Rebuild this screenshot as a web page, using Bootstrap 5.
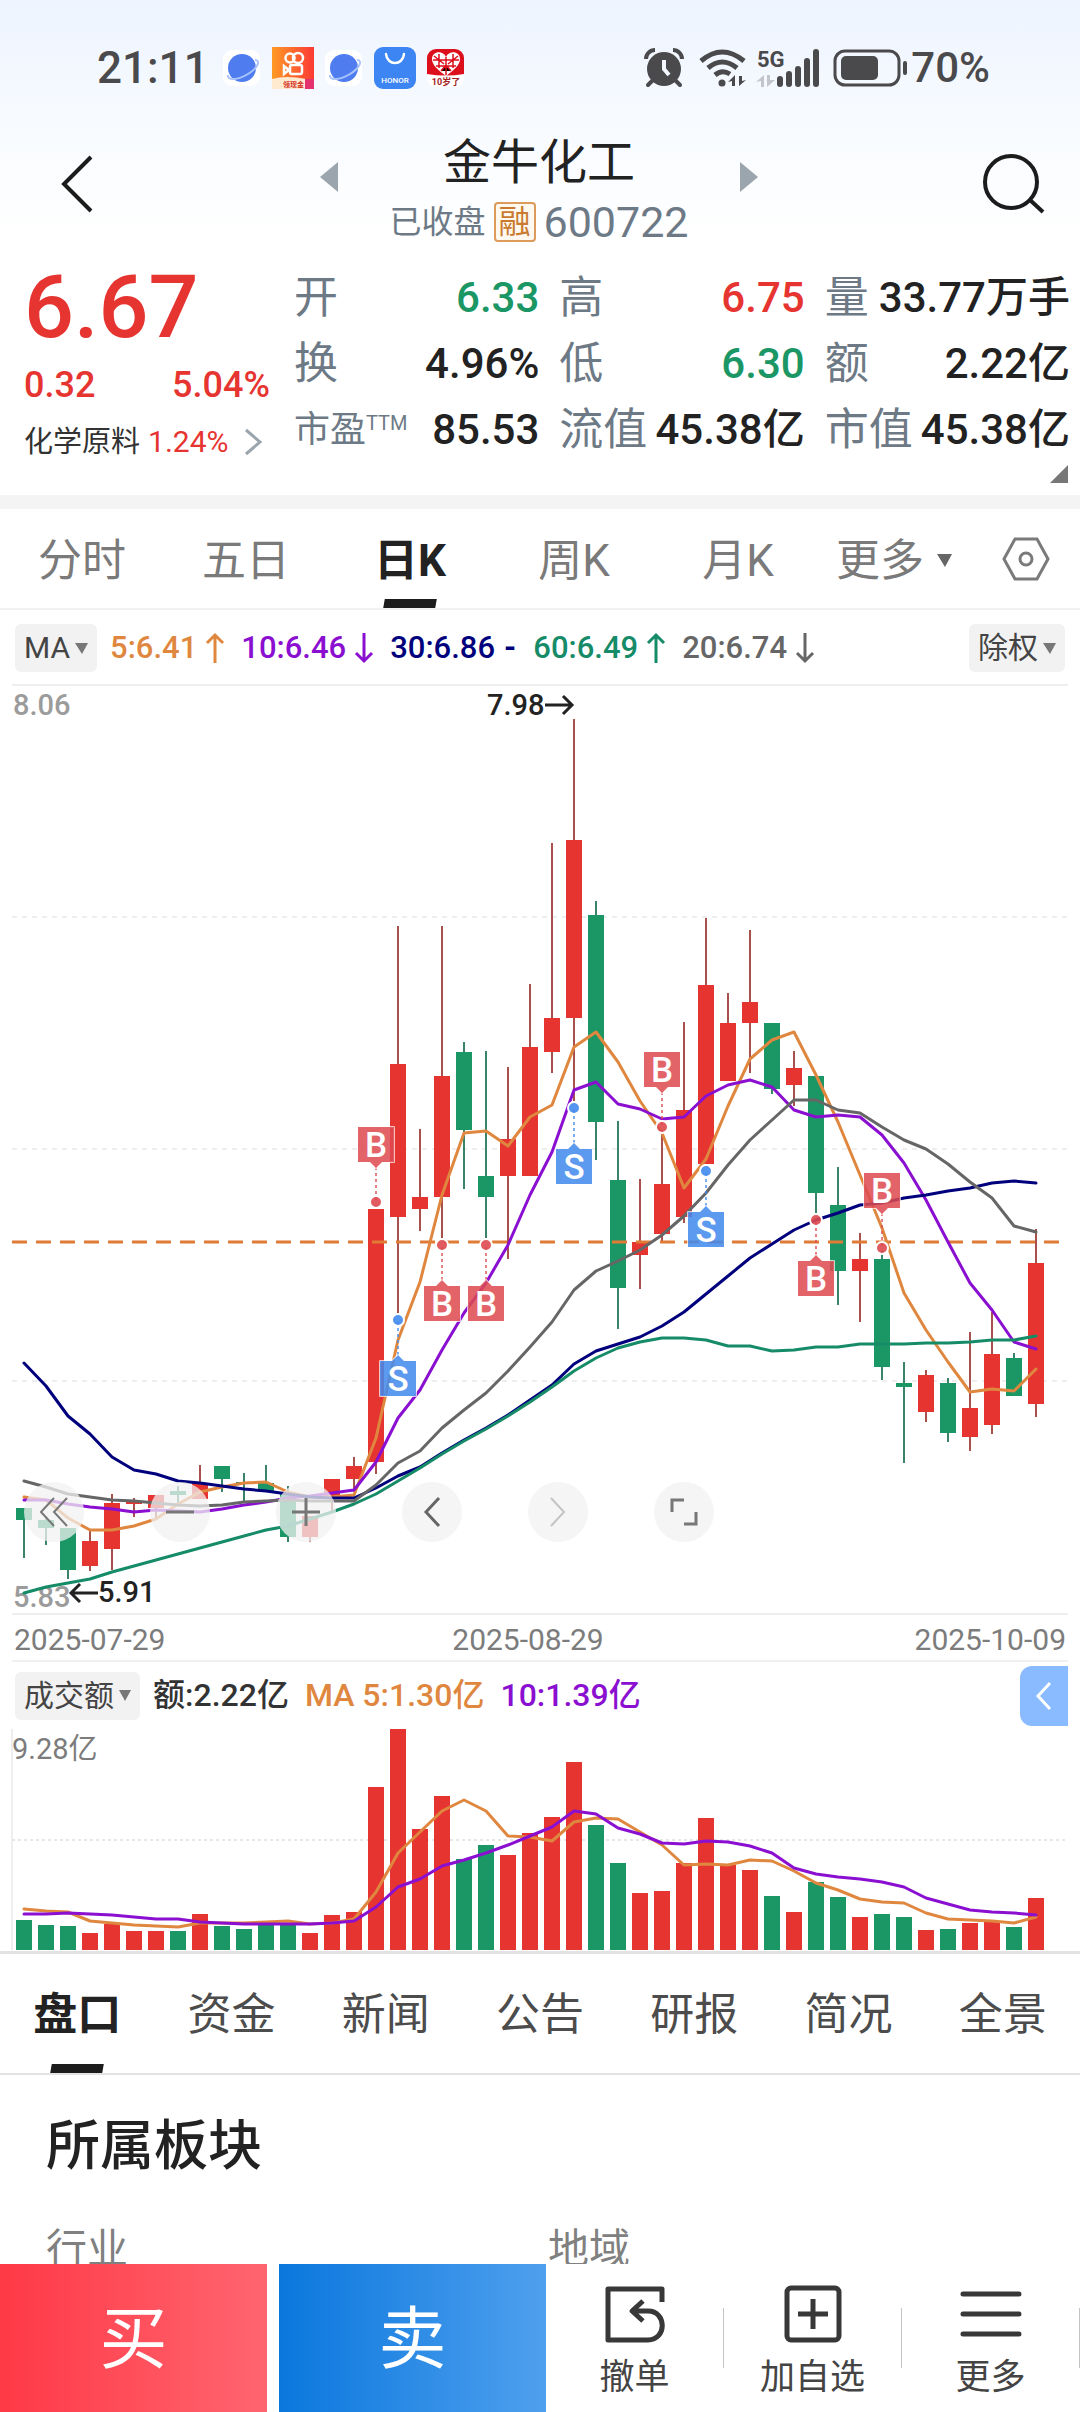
<!DOCTYPE html>
<html lang="zh-CN">
<head>
<meta charset="utf-8">
<meta name="viewport" content="width=device-width, initial-scale=1">
<title>金牛化工 600722</title>
<link href="https://cdn.jsdelivr.net/npm/bootstrap@5.3.0/dist/css/bootstrap.min.css" rel="stylesheet">
<style>
:root{--up:#e63431;--down:#1b9665;--ink:#222;--slate:#6d7a86}
body{font-family:Roboto,"Noto Sans CJK SC",sans-serif;color:var(--ink);background:#fff;line-height:1.2}
button{font-family:inherit}
svg{display:block;flex:none;overflow:visible}
.plain{background:none;border:0;padding:0;color:inherit}
.up{color:var(--up)}.down{color:var(--down)}
.top-area{background:linear-gradient(#edf4ff,#f8fbff 130px,#fff 240px)}
.status{padding:42px 90px 0 97px;height:94px;color:#4a4a4c;font-size:44px;line-height:52px;font-weight:500}
.apps{margin-left:12px;gap:9px}
.power{font-size:42px}
.app-head{padding:41px 34px 6px 60px}
.head-btn{height:98px}
.tri-btn{height:84px}
.switcher{gap:48px}
.stock-name{font-size:48px;line-height:56px;font-weight:400;margin:0 0 7px}
.stock-sub{color:var(--slate);font-size:32px;line-height:48px;width:306px}
.stock-code{font-size:43px}
.rong{color:#c97a2f;border:2px solid #dc9a5b;border-radius:4px;width:42px;line-height:36px;text-align:center;background:#fff8ef}
.quote{padding:13px 10px 0 24px;gap:24px}
.quote-left{width:246px}
.price{font-size:88px;line-height:84px;font-weight:500}
.chg{font-size:36px;line-height:48px;margin:12px 0;font-weight:500}
.sector{font-size:29px;line-height:42px;color:#333}
.sector .up{font-size:30px}
.stats{display:grid;grid-template-columns:repeat(3,1fr);column-gap:20px}
.stat{line-height:66px;font-size:42px;font-weight:500;white-space:nowrap}
.stat dt{font-weight:400;font-size:44px;color:var(--slate)}
.stat dt.pe{font-size:36px}
.pe sup{font-size:20px;top:-12px}
.stat dd{margin:0}
.corner{padding:2px 12px 12px}
.band{height:14px;background:#f4f4f4}
.period{height:101px;border-bottom:2px solid #f1f1f1;color:#7a7a7a;font-size:44px}
.tab-item{position:relative;height:100%;font-size:44px;text-align:center}
.period .tab-item,.more-wrap{padding-top:5px}
.info-tabs .tab-item{padding-top:3px}
.tab-item.on{font-weight:700;color:var(--ink)}
.tab-item.on::after{content:"";position:absolute;left:50%;bottom:0;width:52px;height:9px;margin-left:-26px;background:#1c1c1c;transform:skewX(-10deg)}
.more-wrap{width:124px;margin-left:16px}
.set-wrap{width:120px;padding-right:29px}
.ind-row{padding:2px 15px 0;height:74px}
.pill{background:#f2f2f2;border:0;border-radius:6px;height:48px;padding:0 9px;color:#444;font-size:30px;gap:5px;display:flex;align-items:center}
.ma{font-size:31px;font-weight:500;gap:17px;margin-left:13px}
.ma span{display:flex;align-items:center;gap:9px}
.c5{color:#e0873f}.c10{color:#8a0fd0}.c30{color:#00007c}.c60{color:#168b68}.c20{color:#666}
.chart{position:relative}
.chart svg.plot{width:100%;height:auto}
.zoomer{position:absolute;left:24px;bottom:73px;gap:66px}
.zoomer button{width:60px;height:60px;border-radius:50%;border:0;padding:0;background:rgba(241,241,241,.75);display:flex;align-items:center;justify-content:center}
.dates{margin:0 12px;padding:4px 2px 0;border-bottom:2px solid #f0f0f0;height:47px;font-size:30px;color:#7c7c7c}
.vol-row{padding:0 12px 0 15px;height:67px;font-size:32px;color:#333}
.readout{gap:16px;margin-left:13px;font-weight:500}
.drawer{width:48px;height:60px;background:#8abaff;border-radius:12px 0 0 12px}
.info-tabs{height:124px;border-top:3px solid #e2e2e2;border-bottom:2px solid #e2e2e2;color:#4c4c4c}
.blocks{padding:38px 46px 0}
.blocks h2{font-size:54px;line-height:68px;font-weight:500;margin:0 0 43px}
.blocks .lbl{font-size:41px;line-height:50px;color:#808080}
.bar-btm{height:148px;background:#fff}
.trade{width:267px;font-size:68px;color:#fff;border:0;padding:6px 0 0}
.buy{background:linear-gradient(90deg,#ff3946,#ff6570)}
.sell{background:linear-gradient(90deg,#0a77dd,#4fa0ee);margin-left:12px}
.act{color:#444;font-size:35px;line-height:44px;height:148px;padding-top:9px;gap:13px}
.act-sep{width:3px;height:60px;background:#c4c4c4}
</style>
</head>
<body>
<header class="top-area">
  <div class="status d-flex align-items-center">
    <span>21:11</span>
    <span class="apps d-flex align-items-center">
      <svg width="42" height="40" viewBox="0 0 42 40"><rect x="2" y="2" width="37" height="36" rx="9" fill="#fff"/><circle cx="21" cy="20" r="14" fill="#4f7df0"/><path d="M34 12c6 0 3 8-7 14S6 33 7 27" fill="none" stroke="#a9c3fb" stroke-width="2"/></svg>
      <svg width="42" height="42" viewBox="0 0 42 42"><defs><linearGradient id="ks"><stop stop-color="#ff9a26"/><stop offset="1" stop-color="#fb3a34"/></linearGradient></defs><rect width="42" height="42" fill="url(#ks)"/><g fill="none" stroke="#fff" stroke-width="2.500"><circle cx="18" cy="11" r="4.500"/><circle cx="26" cy="11" r="5"/><rect x="18" y="18" width="12" height="9" rx="2"/><path d="M12 19v8l5-4z"/></g><path d="M0 32q14-4 34 0v10H0z" fill="#ffe9cf"/><text x="11" y="40" font-size="7" font-weight="700" fill="#d3301f">领现金</text><rect x="33" y="32" width="9" height="10" fill="#e4326e"/></svg>
      <svg width="42" height="40" viewBox="0 0 42 40"><rect x="2" y="2" width="37" height="36" rx="9" fill="#fff"/><circle cx="21" cy="20" r="14" fill="#4f7df0"/><path d="M34 12c6 0 3 8-7 14S6 33 7 27" fill="none" stroke="#a9c3fb" stroke-width="2"/></svg>
      <svg width="42" height="42" viewBox="0 0 42 42"><rect width="42" height="42" rx="9" fill="#3d85f2"/><path d="M12 7c1 12 17 12 18 0" fill="none" stroke="#fff" stroke-width="2.500" stroke-linecap="round"/><text x="21" y="36" font-size="8" text-anchor="middle" fill="#fff">HONOR</text></svg>
      <svg width="42" height="40" viewBox="-1 0 42 40"><rect x="1" y="1" width="37" height="38" rx="9" fill="#fff"/><path d="M10 1h19a9 9 0 0 1 9 9v16q-18 3-37 0V10a9 9 0 0 1 9-9z" fill="#dc0f1c"/><path d="M20 28C12 22 6 17 6 11c0-8 11-9 14-2 3-7 14-6 14 2 0 6-6 11-14 17z" fill="#fff"/><path d="M20 9v18M13 6v14M27 6v14M7 12h26M10 18h20M8 8l10 8M32 8l-10 8M15 23l5-6 5 6" stroke="#dc0f1c" stroke-width="1.500"/><text x="20" y="37" font-size="9" font-weight="700" text-anchor="middle" fill="#a3221e">10岁了</text></svg>
    </span>
    <span class="d-flex align-items-center ms-auto">
      <svg width="38" height="38" viewBox="0 0 38 38" fill="#4a4a4c"><circle cx="19" cy="20" r="17"/><path d="M7 32l-4 4M31 32l4 4" stroke="#4a4a4c" stroke-width="4" stroke-linecap="round"/><path d="M1 10a9 9 0 0 1 9-9M37 10a9 9 0 0 0-9-9" fill="none" stroke="#4a4a4c" stroke-width="4"/><path d="M19 11v9l5 6" fill="none" stroke="#f3f7ff" stroke-width="4"/></svg>
      <svg class="ms-3" width="48" height="38" viewBox="0 0 48 38" fill="none" stroke="#4a4a4c" stroke-width="5"><path d="M2 12q21-18 43 0M9 19q14-12 29 0M16 26q7-6 15-1"/><circle cx="23" cy="34" r="3.500" fill="#4a4a4c" stroke="none"/><path d="M29 33l7-7v11h-3v-5zM47 31l-7 6V27h3v5z" fill="#4a4a4c" stroke="none"/></svg>
      <svg class="ms-2" width="66" height="44" viewBox="0 -3 66 44" fill="#4a4a4c"><text x="2" y="18" font-size="22" font-weight="700">5G</text><path d="M1 33l8-7v12H6v-6zM20 31l-8 7V26h3v5z" fill="#c3c5ca"/><rect x="22" y="27" width="6" height="11" rx="3"/><rect x="31" y="22" width="6" height="16" rx="3"/><rect x="40" y="17" width="6" height="21" rx="3"/><rect x="49" y="9" width="6" height="29" rx="3"/><rect x="58" y="0" width="6" height="38" rx="3"/></svg>
      <svg class="ms-2" width="78" height="38" viewBox="0 0 78 38"><rect x="6" y="2" width="64" height="34" rx="10" fill="none" stroke="#4a4a4c" stroke-width="3"/><rect x="12" y="7" width="37" height="24" rx="5" fill="#4a4a4c"/><rect x="74" y="12" width="4" height="14" rx="2" fill="#4a4a4c"/></svg>
      <span class="power ms-1">70%</span>
    </span>
  </div>
  <div class="app-head d-flex justify-content-between align-items-start">
    <button class="plain head-btn" aria-label="返回"><svg width="36" height="60" viewBox="0 0 36 60"><path d="M31 3L4 30l27 27" fill="none" stroke="#1c1c1c" stroke-width="4"/></svg></button>
    <div class="switcher d-flex align-items-start">
      <button class="plain tri-btn" aria-label="上一只"><svg width="18" height="30"><path d="M18 0v30L0 15z" fill="#9ba5ae"/></svg></button>
      <div class="text-center">
        <h1 class="stock-name">金牛化工</h1>
        <div class="stock-sub d-flex align-items-center justify-content-center gap-2"><span>已收盘</span><span class="rong">融</span><span class="stock-code">600722</span></div>
      </div>
      <button class="plain tri-btn" aria-label="下一只"><svg width="18" height="30"><path d="M0 0v30l18-15z" fill="#9ba5ae"/></svg></button>
    </div>
    <button class="plain head-btn" aria-label="搜索"><svg width="64" height="62" viewBox="0 0 64 62"><circle cx="29" cy="29" r="26" fill="none" stroke="#1c1c1c" stroke-width="4"/><path d="M48 47l13 12" stroke="#1c1c1c" stroke-width="4"/></svg></button>
  </div>
</header>

<section class="quote d-flex">
  <div class="quote-left">
    <div class="price up">6.67</div>
    <div class="chg up d-flex justify-content-between"><span>0.32</span><span>5.04%</span></div>
    <a href="#" class="sector d-flex align-items-center gap-2 text-decoration-none"><span>化学原料</span><span class="up">1.24%</span><svg class="ms-2" width="18" height="28" viewBox="0 0 18 28"><path d="M2 2l14 12L2 26" fill="none" stroke="#9ba5ae" stroke-width="3"/></svg></a>
  </div>
  <dl class="stats flex-grow-1 mb-0">
    <div class="stat d-flex justify-content-between"><dt>开</dt><dd class="down">6.33</dd></div>
    <div class="stat d-flex justify-content-between"><dt>高</dt><dd class="up">6.75</dd></div>
    <div class="stat d-flex justify-content-between"><dt>量</dt><dd>33.77万手</dd></div>
    <div class="stat d-flex justify-content-between"><dt>换</dt><dd>4.96%</dd></div>
    <div class="stat d-flex justify-content-between"><dt>低</dt><dd class="down">6.30</dd></div>
    <div class="stat d-flex justify-content-between"><dt>额</dt><dd>2.22亿</dd></div>
    <div class="stat d-flex justify-content-between"><dt class="pe">市盈<sup>TTM</sup></dt><dd>85.53</dd></div>
    <div class="stat d-flex justify-content-between"><dt>流值</dt><dd>45.38亿</dd></div>
    <div class="stat d-flex justify-content-between"><dt>市值</dt><dd>45.38亿</dd></div>
  </dl>
</section>
<div class="corner d-flex justify-content-end"><svg width="18" height="18"><path d="M18 0v18H0z" fill="#777"/></svg></div>
<div class="band"></div>

<nav class="period d-flex align-items-center">
  <button class="plain tab-item flex-fill w-100">分时</button>
  <button class="plain tab-item flex-fill w-100">五日</button>
  <button class="plain tab-item flex-fill w-100 on">日K</button>
  <button class="plain tab-item flex-fill w-100">周K</button>
  <button class="plain tab-item flex-fill w-100">月K</button>
  <button class="plain more-wrap d-flex align-items-center flex-shrink-0">更多<svg class="ms-auto me-2" width="15" height="13"><path d="M0 0h15l-7 13z" fill="#666"/></svg></button>
  <button class="plain set-wrap flex-shrink-0 d-flex justify-content-end" aria-label="设置"><svg width="50" height="44" viewBox="0 0 50 44" fill="none" stroke="#7a7a7a" stroke-width="3"><path d="M14 2h22l11 20-11 20H14L3 22z"/><circle cx="25" cy="22" r="6"/></svg></button>
</nav>

<div class="ind-row d-flex align-items-center">
  <button class="pill">MA<svg width="13" height="11"><path d="M0 0h13l-6 11z" fill="#777"/></svg></button>
  <div class="ma d-flex">
    <span class="c5">5:6.41<svg width="18" height="30" viewBox="0 0 18 30"><path d="M9 30V2M1 10l8-8 8 8" fill="none" stroke="currentColor" stroke-width="3"/></svg></span>
    <span class="c10">10:6.46<svg width="18" height="30" viewBox="0 0 18 30"><path d="M9 0v28M1 20l8 8 8-8" fill="none" stroke="currentColor" stroke-width="3"/></svg></span>
    <span class="c30">30:6.86<b>-</b></span>
    <span class="c60">60:6.49<svg width="18" height="30" viewBox="0 0 18 30"><path d="M9 30V2M1 10l8-8 8 8" fill="none" stroke="currentColor" stroke-width="3"/></svg></span>
    <span class="c20">20:6.74<svg width="18" height="30" viewBox="0 0 18 30"><path d="M9 0v28M1 20l8 8 8-8" fill="none" stroke="currentColor" stroke-width="3"/></svg></span>
  </div>
  <button class="pill ms-auto">除权<svg width="13" height="11"><path d="M0 0h13l-6 11z" fill="#777"/></svg></button>
</div>

<div class="chart">
  <svg class="plot" id="kline" viewBox="0 684 1080 931" role="img" aria-label="日K线图">
    <path d="M12 685h1056M12 1614h1056" stroke="#eee" stroke-width="2"/>
    <path d="M12 917h1056M12 1149h1056M12 1381h1056" stroke="#eee" stroke-width="2" stroke-dasharray="5 5"/>
    <text x="13" y="715" font-size="29" font-weight="500" fill="#9b9b9b">8.06</text>
    <text x="13" y="1607" font-size="29" font-weight="500" fill="#9b9b9b">5.83</text>
    <text x="487" y="715" font-size="29" font-weight="500" fill="#222">7.98</text>
    <path d="M545 705h27M563 696l9 9-9 9" fill="none" stroke="#222" stroke-width="3"/>
    <text x="98" y="1602" font-size="29" font-weight="500" fill="#222">5.91</text>
    <path d="M98 1593H71M80 1584l-9 9 9 9" fill="none" stroke="#222" stroke-width="3"/>
  </svg>
  <div class="zoomer d-flex">
    <button aria-label="最早"><svg width="30" height="30" viewBox="0 0 30 30" fill="none" stroke="#777" stroke-width="2"><path d="M15 1L2 15l13 14M28 1L15 15l13 14"/></svg></button>
    <button aria-label="缩小"><svg width="30" height="30"><path d="M1 15h28" stroke="#777" stroke-width="3"/></svg></button>
    <button aria-label="放大"><svg width="30" height="30"><path d="M1 15h28M15 1v28" stroke="#777" stroke-width="3"/></svg></button>
    <button aria-label="左移"><svg width="16" height="30" viewBox="0 0 16 30"><path d="M15 1L2 15l13 14" fill="none" stroke="#666" stroke-width="3"/></svg></button>
    <button aria-label="右移"><svg width="16" height="30" viewBox="0 0 16 30"><path d="M1 1l13 14L1 29" fill="none" stroke="#c4c4c4" stroke-width="2"/></svg></button>
    <button aria-label="全屏"><svg width="28" height="28" viewBox="0 0 28 28"><path d="M2 14V2h12M14 26h12V14" fill="none" stroke="#777" stroke-width="3"/></svg></button>
  </div>
</div>
<div class="dates d-flex justify-content-between align-items-center"><span>2025-07-29</span><span class="me-4">2025-08-29</span><span>2025-10-09</span></div>

<div class="vol-row d-flex align-items-center">
  <button class="pill">成交额<svg width="12" height="11"><path d="M0 0h12l-6 11z" fill="#777"/></svg></button>
  <div class="readout d-flex">
    <span>额:2.22亿</span>
    <span class="c5">MA 5:1.30亿</span>
    <span class="c10">10:1.39亿</span>
  </div>
  <button class="plain drawer ms-auto d-flex align-items-center justify-content-center" aria-label="展开"><svg width="16" height="28" viewBox="0 0 16 28"><path d="M14 1L2 14l12 13" fill="none" stroke="#fff" stroke-width="3"/></svg></button>
</div>
<div class="chart">
  <svg class="plot" id="volume" viewBox="0 1729 1080 222" role="img" aria-label="成交额图">
    <path d="M12 1729v221" stroke="#eee" stroke-width="2"/>
    <path d="M12 1840h1056" stroke="#e6e6e6" stroke-width="2" stroke-dasharray="3 3"/>
    <text x="12" y="1759" font-size="29" fill="#7c7c7c">9.28亿</text>
  </svg>
</div>

<nav class="info-tabs d-flex">
  <button class="plain tab-item flex-fill w-100 on">盘口</button>
  <button class="plain tab-item flex-fill w-100">资金</button>
  <button class="plain tab-item flex-fill w-100">新闻</button>
  <button class="plain tab-item flex-fill w-100">公告</button>
  <button class="plain tab-item flex-fill w-100">研报</button>
  <button class="plain tab-item flex-fill w-100">简况</button>
  <button class="plain tab-item flex-fill w-100">全景</button>
</nav>

<section class="blocks">
  <h2>所属板块</h2>
  <div class="row g-0"><div class="col-6 lbl">行业</div><div class="col-6 lbl ps-2">地域</div></div>
</section>

<footer class="bar-btm fixed-bottom d-flex">
  <button class="trade buy">买</button>
  <button class="trade sell">卖</button>
  <div class="d-flex flex-grow-1 align-items-center">
    <button class="plain act flex-fill w-100 d-flex flex-column align-items-center justify-content-center"><svg width="60" height="58" viewBox="0 0 60 58" fill="none" stroke="#383838" stroke-width="5"><path d="M57 17V4H3v51h40c19 0 19-29 0-29H28M38 16L27 26l11 10" stroke-linejoin="round"/></svg>撤单</button>
    <span class="act-sep"></span>
    <button class="plain act flex-fill w-100 d-flex flex-column align-items-center justify-content-center"><svg width="58" height="58" viewBox="0 0 58 58" fill="none" stroke="#383838" stroke-width="5"><rect x="3" y="3" width="52" height="52" rx="4"/><path d="M14 29h30M29 14v30"/></svg>加自选</button>
    <span class="act-sep"></span>
    <button class="plain act flex-fill w-100 d-flex flex-column align-items-center justify-content-center"><svg width="62" height="58" viewBox="0 0 62 58" stroke="#383838" stroke-width="5" stroke-linecap="round"><path d="M3 9h56M3 29h56M3 49h56"/></svg>更多</button>
    <span class="act-sep"></span>
  </div>
</footer>

<script src="https://cdn.jsdelivr.net/npm/bootstrap@5.3.0/dist/js/bootstrap.bundle.min.js"></script>
<script>
const NS = 'http://www.w3.org/2000/svg', UP = '#e63431', DOWN = '#1b9665';
const cx = i => 24 + 22 * i;
function add(svg, tag, attrs, text) {
  const el = document.createElementNS(NS, tag);
  for (const k in attrs) el.setAttribute(k, attrs[k]);
  if (text) el.textContent = text;
  svg.appendChild(el);
}
// one entry per day: rise or fall, high, body top, body bottom, low
const days = `g 1508 1508 1520 1558|g 1516 1520 1528 1545|g 1528 1528 1570 1579|r 1530 1541 1566 1571|r 1494 1503 1549 1570|r 1498 1502 1504 1517|r 1495 1495 1508 1518|g 1486 1491 1495 1503|r 1465 1483 1499 1499|g 1466 1466 1479 1492|g 1473 1482 1484 1502|g 1465 1483 1491 1491|g 1486 1493 1537 1542|r 1516 1516 1537 1542|r 1479 1479 1497 1512|r 1457 1466 1479 1492|r 1209 1209 1462 1474|r 926 1064 1217 1313|r 1129 1197 1209 1231|r 926 1076 1197 1238|g 1042 1052 1130 1189|g 1051 1176 1197 1238|r 1067 1139 1176 1259|r 984 1047 1176 1176|r 843 1018 1052 1073|r 719 840 1018 1101|g 901 915 1122 1160|g 1121 1180 1288 1329|r 1179 1242 1255 1289|r 1130 1184 1234 1242|r 1022 1110 1217 1223|r 918 985 1164 1164|r 993 1023 1081 1081|r 930 1002 1023 1073|g 1023 1023 1089 1094|r 1051 1068 1085 1106|g 1076 1076 1193 1213|g 1167 1205 1271 1305|r 1233 1259 1271 1322|g 1250 1259 1367 1380|g 1362 1383 1387 1463|r 1370 1375 1412 1422|g 1378 1383 1433 1442|r 1332 1408 1437 1451|r 1312 1354 1425 1434|g 1353 1358 1396 1396|r 1229 1263 1404 1417`.split('|').map(s => s.split(' '));
const k = document.getElementById('kline');
days.forEach(([c, h, t, b, l], i) => {
  add(k, 'path', {d: `M${cx(i)} ${h}V${l}`, stroke: c === 'r' ? '#a8504c' : '#3a8268', 'stroke-width': 2});
  add(k, 'rect', {x: cx(i) - 8, y: t, width: 16, height: b - t, fill: c === 'r' ? UP : DOWN});
});
add(k, 'path', {d: 'M12 1242h1050', stroke: '#e07a35', 'stroke-width': 3, 'stroke-dasharray': '15 9'});
const line = (svg, ys, color) => add(svg, 'polyline', {points: ys.map((y, i) => cx(i) + ',' + y).join(' '), fill: 'none', stroke: color, 'stroke-width': 3, 'stroke-linejoin': 'round', 'stroke-linecap': 'round'});
line(k, [1497,1500,1518,1530,1530,1526,1519,1504,1492,1487,1483,1482,1492,1497,1497,1495,1438,1340,1282,1195,1133,1131,1146,1117,1105,1047,1032,1062,1101,1133,1188,1159,1106,1059,1040,1032,1075,1122,1175,1228,1293,1330,1362,1392,1389,1391,1369], '#e0873f');
line(k, [1500,1500,1504,1507,1509,1512,1510,1511,1512,1509,1505,1502,1498,1496,1493,1490,1462,1418,1390,1350,1313,1283,1245,1195,1152,1090,1082,1104,1109,1119,1117,1096,1085,1080,1087,1110,1117,1115,1117,1135,1163,1200,1242,1283,1310,1342,1349], '#8a0fd0');
line(k, [1363,1386,1416,1434,1457,1470,1474,1481,1483,1486,1489,1491,1494,1497,1498,1498,1488,1476,1467,1453,1440,1428,1415,1400,1385,1364,1351,1344,1337,1326,1312,1294,1276,1258,1244,1230,1220,1213,1205,1203,1198,1195,1191,1188,1183,1181,1183], '#00007c');
line(k, [1593,1587,1583,1579,1572,1566,1560,1554,1548,1542,1536,1530,1526,1519,1512,1504,1494,1481,1468,1454,1441,1429,1416,1402,1387,1371,1358,1348,1342,1338,1338,1340,1346,1346,1351,1350,1347,1347,1344,1344,1344,1343,1343,1342,1340,1340,1336], '#168b68');
line(k, [1481,1487,1494,1497,1500,1501,1503,1505,1506,1505,1502,1501,1500,1501,1501,1501,1485,1463,1451,1428,1410,1393,1371,1347,1322,1290,1271,1261,1250,1235,1216,1193,1165,1140,1120,1100,1100,1110,1113,1127,1140,1149,1164,1182,1198,1226,1232], '#666');
// trade marks: day, kind, top of the tag, y of the dot
[[16,'B',1127,1202],[17,'S',1361,1320],[19,'B',1286,1245],[21,'B',1286,1245],[25,'S',1149,1108],[29,'B',1052,1127],[31,'S',1212,1171],[36,'B',1261,1220],[39,'B',1173,1248]].forEach(([i, kind, top, dot]) => {
  const x = cx(i), color = kind === 'B' ? '#dd4a50' : '#4189ee', above = dot > top;
  add(k, 'path', {d: above ? `M${x} ${top + 40}V${dot}` : `M${x} ${top - 6}V${dot}`, stroke: color, 'stroke-width': 2, 'stroke-dasharray': '3 3', opacity: .7});
  add(k, 'path', {d: above ? `M${x-18} ${top}h36v35h-12l-6 6-6-6h-12z` : `M${x-18} ${top}h12l6-6 6 6h12v35h-36z`, fill: color, 'fill-opacity': .86, stroke: '#fff', 'stroke-opacity': .7, 'stroke-width': 2, 'paint-order': 'stroke', 'stroke-linejoin': 'round'});
  add(k, 'text', {x, y: top + 30, 'font-size': 35, 'font-weight': 500, 'text-anchor': 'middle', fill: '#fff'}, kind);
  add(k, 'circle', {cx: x, cy: dot, r: 6, fill: color, 'fill-opacity': .9, stroke: '#fff', 'stroke-width': 2});
});
const v = document.getElementById('volume');
[1920,1925,1926,1933,1924,1931,1931,1931,1914,1926,1929,1925,1925,1933,1915,1912,1787,1729,1829,1796,1859,1845,1855,1833,1817,1762,1825,1863,1893,1891,1863,1818,1865,1870,1896,1912,1882,1897,1917,1914,1917,1930,1929,1923,1922,1927,1898].forEach((y, i) => add(v, 'rect', {x: cx(i) - 8, y, width: 16, height: 1950 - y, fill: days[i][0] === 'r' ? UP : DOWN}));
line(v, [1909,1911,1912,1921,1923,1925,1926,1927,1923,1923,1923,1922,1921,1924,1923,1919,1892,1853,1832,1811,1800,1811,1836,1837,1841,1822,1818,1819,1832,1845,1865,1864,1865,1860,1861,1871,1883,1890,1899,1902,1903,1913,1919,1920,1921,1923,1917], '#e0873f');
line(v, [1914,1914,1913,1914,1915,1917,1919,1919,1922,1923,1924,1924,1924,1924,1923,1921,1907,1887,1879,1866,1860,1853,1845,1836,1827,1811,1814,1828,1834,1843,1844,1841,1842,1846,1853,1868,1874,1877,1879,1882,1887,1898,1904,1910,1912,1913,1915], '#8a0fd0');
</script>
</body>
</html>
